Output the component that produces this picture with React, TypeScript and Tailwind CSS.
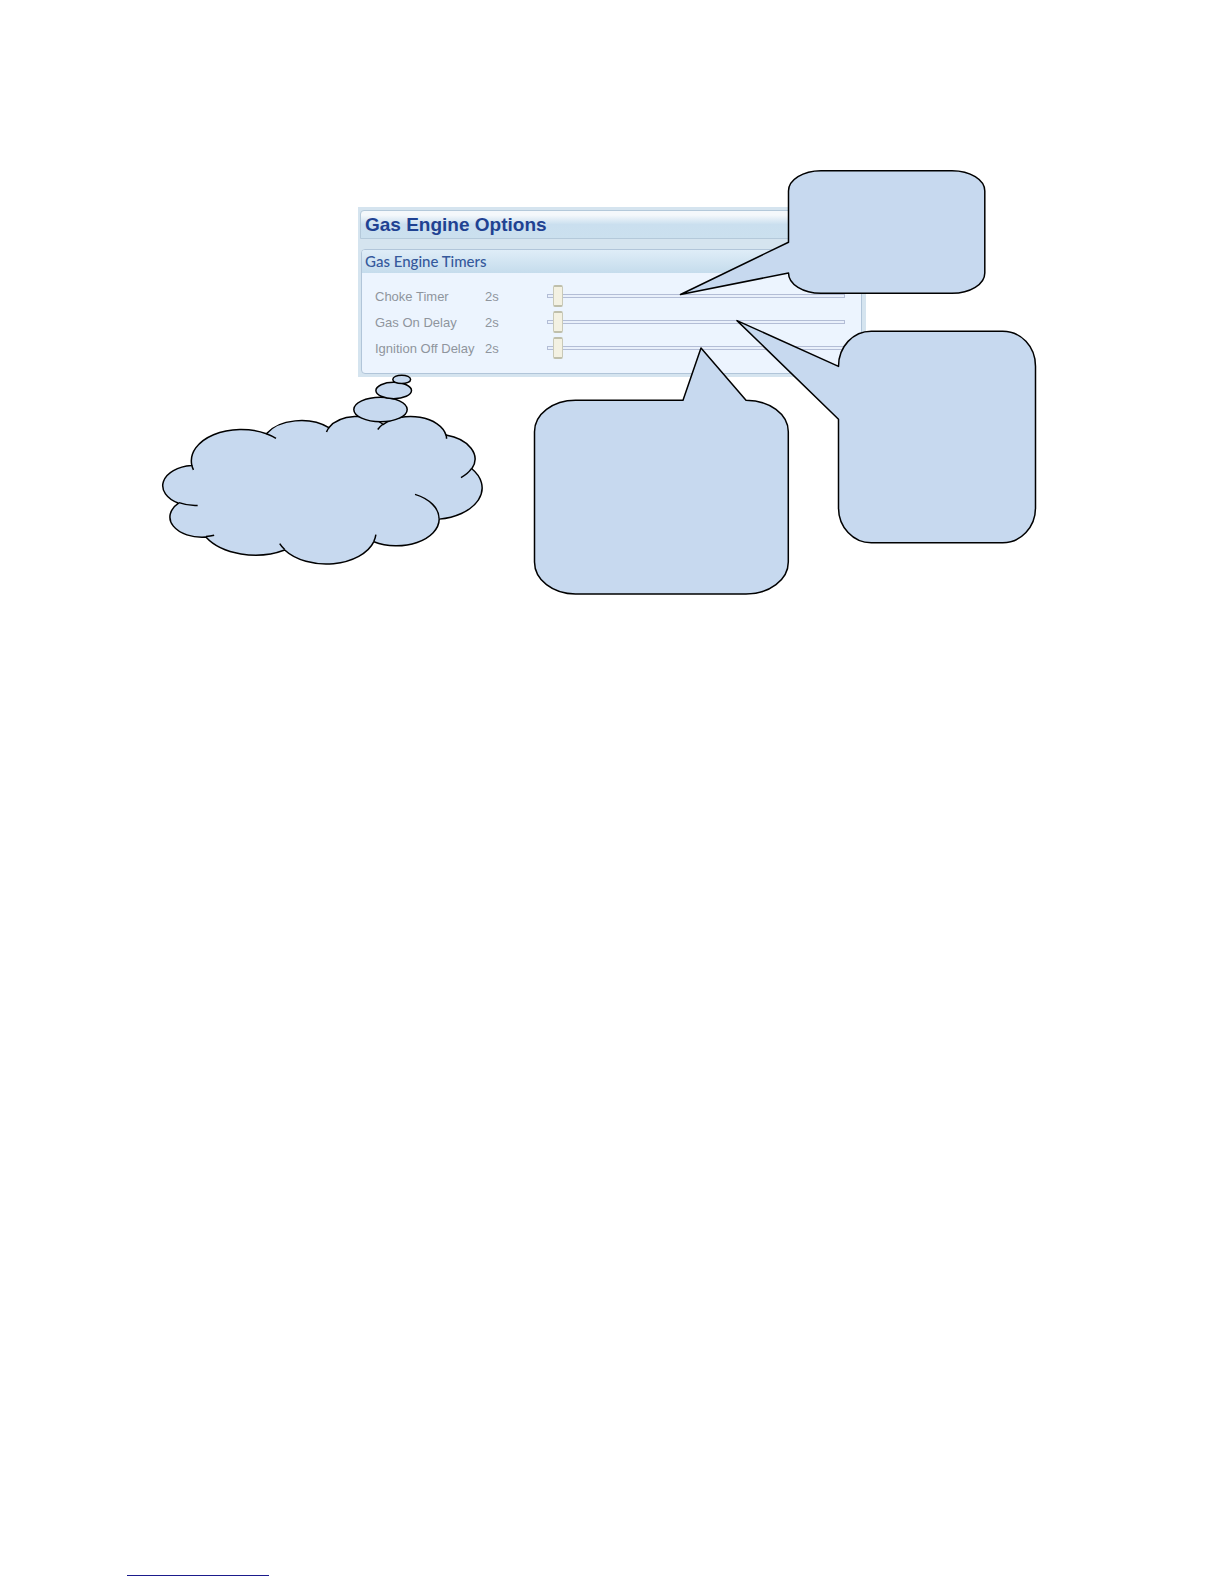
const timers = [
  { id: 'choke-timer', label: 'Choke Timer', seconds: 2 },
  { id: 'gas-on-delay', label: 'Gas On Delay', seconds: 2 },
  { id: 'ignition-off-delay', label: 'Ignition Off Delay', seconds: 2 },
];

type Arc = [rx: number, ry: number, start: number, sweep: number];

// Cloud lobes: radii plus start and sweep angles in 1/60000 of a degree
const lobes: Arc[] = [
  [6753, 9190, -11429249, 7426832],
  [5333, 7267, -8646143, 5396714],
  [4365, 5945, -8748475, 5983381],
  [4857, 6595, -7859164, 7034504],
  [5333, 7273, -4722533, 6541615],
  [6775, 9220, -2776035, 7816140],
  [5785, 7867, 37501, 6842000],
  [6752, 9215, 1347096, 6910353],
  [7720, 10543, 3974558, 4542661],
  [4360, 5918, -16496525, 8804134],
  [4345, 5945, -14809710, 9151131],
];

// Short strokes where a lobe runs on into the cloud
const creases: { from: [number, number]; arc: Arc }[] = [
  { from: [4693, 26177], arc: [4345, 5945, 5204520, 1585770] },
  { from: [6928, 34899], arc: [4360, 5918, 4416628, 686848] },
  { from: [16478, 39090], arc: [6752, 9215, 8257449, 844866] },
  { from: [28827, 34751], arc: [6752, 9215, 387196, 959901] },
  { from: [34129, 22954], arc: [5785, 7867, -4217541, 4255042] },
  { from: [41798, 15354], arc: [5333, 7273, 1819082, 1665090] },
  { from: [38324, 5426], arc: [4857, 6595, -824660, 891534] },
  { from: [29078, 3952], arc: [4857, 6595, -8950887, 1091722] },
  { from: [22141, 4720], arc: [4365, 5945, -9809656, 1061181] },
  { from: [14000, 5192], arc: [6753, 9190, -4002417, 739161] },
  { from: [4127, 15789], arc: [6753, 9190, 9459261, 711490] },
];

function arcTo([rx, ry, start, sweep]: Arc) {
  const point = (angle: number) => {
    const a = (angle / 60000) * (Math.PI / 180);
    const t = Math.atan2(rx * Math.sin(a), ry * Math.cos(a));
    return [rx * Math.cos(t), ry * Math.sin(t)];
  };
  const [x1, y1] = point(start);
  const [x2, y2] = point(start + sweep);
  const large = Math.abs(sweep) > 180 * 60000 ? 1 : 0;
  return `a${rx} ${ry} 0 ${large} 1 ${Math.round(x2 - x1)} ${Math.round(y2 - y1)}`;
}

const cloudOutline = `M3900 14370${lobes.map(arcTo).join('')}z`;
const cloudCreases = creases.map(({ from, arc }) => `M${from.join(' ')}${arcTo(arc)}`).join('');

function Callouts() {
  return (
    <svg
      viewBox="358 207 508 170"
      className="absolute inset-0 size-full overflow-visible pointer-events-none"
      fill="#c7d9ef"
      stroke="#000"
      strokeWidth="1.5"
      strokeLinejoin="round"
      aria-hidden="true"
    >
      <svg x="163" y="416" width="319" height="147.5" viewBox="0 0 43200 43200" preserveAspectRatio="none" overflow="visible">
        <path d={cloudOutline} vectorEffect="non-scaling-stroke" />
        <path d={cloudCreases} fill="none" vectorEffect="non-scaling-stroke" />
      </svg>
      <ellipse cx="380.5" cy="409.5" rx="26.7" ry="12.2" />
      <ellipse cx="393.7" cy="390.5" rx="17.8" ry="8.2" />
      <ellipse cx="401.7" cy="379.4" rx="8.9" ry="4.2" />
      <path d="M575.5 400.3H683L701 348l45 52.3c23.5 0 42.3 13.9 42.3 31.5V562c0 17.8-18.8 32-42.3 32H575.5c-22.7 0-41-14.2-41-32V431.8c0-17.6 18.3-31.5 41-31.5z" />
      <path d="M871.3 331.2h131.4c18.2 0 32.8 15.4 32.8 35v141.6c0 19.3-14.6 35-32.8 35H871.3c-18.2 0-32.8-15.7-32.8-35V419.2L737 320.6l101.5 45.8c0-19.8 14.6-35.2 32.8-35.2z" />
      <path d="M821 170.8h131c18.2 0 32.8 9 32.8 20.3V273c0 11.3-14.6 20.3-32.8 20.3H821c-18 0-32.5-9-32.5-20.3L680.5 294.5l108-52.3v-51.1c0-11.3 14.5-20.3 32.5-20.3z" />
    </svg>
  );
}

export default function App() {
  return (
    <div className="min-h-screen flex flex-col justify-between bg-white pt-[207px] pb-2 font-['Liberation_Sans',Arial,sans-serif]">
      <main className="relative w-full max-w-[508px] mx-auto">
        <section className="bg-[#d5e4ef] pt-[3px] pb-[3px] pl-[2px] pr-[4px]">
          <h1 className="h-[29px] pl-1 border border-[#b4c9da] rounded-t-sm bg-linear-to-b from-[#f4f8fb] from-15% via-[#cadfef] via-50% to-[#cbe0ee] text-[19px] leading-[27px] font-bold text-[#1f4292]">
            Gas Engine Options
          </h1>
          <div className="mt-[10px] ml-px border border-[#b1c5d9] rounded-[4px] overflow-hidden bg-[#ecf4fe]">
            <h2 className="h-[23px] pl-[3px] bg-linear-to-b from-[#dfedf8] to-[#c5dcec] font-['Lato',sans-serif] text-[15px] leading-[22px] font-medium text-[#35599c]">
              Gas Engine Timers
            </h2>
            <div className="pt-[11px] pb-[11px] pl-[13px] pr-[16px]">
              {timers.map(({ id, label, seconds }) => (
                <div key={id} className="h-[26px] flex items-center text-[13px] text-[#8f959d]">
                  <label htmlFor={id} className="w-[110px] shrink-0">
                    {label}
                  </label>
                  <output htmlFor={id} className="w-[62px] shrink-0">
                    {seconds}s
                  </output>
                  <input
                    id={id}
                    type="range"
                    min={0}
                    max={120}
                    defaultValue={seconds}
                    disabled
                    className="h-[22px] mb-[2px] min-w-0 flex-1 appearance-none bg-transparent [&::-webkit-slider-runnable-track]:h-1 [&::-webkit-slider-runnable-track]:border [&::-webkit-slider-runnable-track]:border-[#b3bdd6] [&::-webkit-slider-runnable-track]:bg-[#e9f0fb] [&::-webkit-slider-thumb]:appearance-none [&::-webkit-slider-thumb]:w-[10px] [&::-webkit-slider-thumb]:h-[22px] [&::-webkit-slider-thumb]:-mt-[10px] [&::-webkit-slider-thumb]:rounded-[2px] [&::-webkit-slider-thumb]:border [&::-webkit-slider-thumb]:border-[#c9c9b8] [&::-webkit-slider-thumb]:border-y-2 [&::-webkit-slider-thumb]:border-y-[#bfbfab] [&::-webkit-slider-thumb]:bg-[#f3f1e2]"
                  />
                </div>
              ))}
            </div>
          </div>
        </section>
        <Callouts />
      </main>
      <footer className="px-[127px]">
        <hr className="w-[142px] h-px border-0 bg-[#1b1b8c]" />
      </footer>
    </div>
  );
}
